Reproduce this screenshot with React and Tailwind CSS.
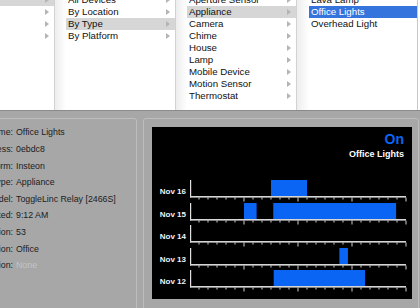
const byGroup = ['All Devices', 'By Location', 'By Type', 'By Platform'];
const byType = ['Aperture Sensor', 'Appliance', 'Camera', 'Chime', 'House', 'Lamp', 'Mobile Device', 'Motion Sensor', 'Thermostat'];
const devices = ['Lava Lamp', 'Office Lights', 'Overhead Light'];

const info = [
  ['Name:', 'Office Lights'],
  ['Address:', '0ebdc8'],
  ['Platform:', 'Insteon'],
  ['Type:', 'Appliance'],
  ['Model:', 'ToggleLinc Relay [2466S]'],
  ['Last Updated:', '9:12 AM'],
  ['Firmware Version:', '53'],
  ['Location:', 'Office'],
  ['Description:', 'None', true],
];

// hours on, per day
const days = [
  { label: 'Nov 16', on: [[9, 13]] },
  { label: 'Nov 15', on: [[6, 7.4], [9.25, 22.9]] },
  { label: 'Nov 14', on: [] },
  { label: 'Nov 13', on: [[16.6, 17.55]] },
  { label: 'Nov 12', on: [[9.3, 19.45]] },
];

const Arrow = () => (
  <svg width="4" height="6" viewBox="0 0 4 6" className="shrink-0">
    <path d="M0 0L4 3L0 6Z" fill="#b4b4b4" />
  </svg>
);

const Divider = () => (
  <div className="w-[12px] shrink-0 border-l border-[#d2d2d2] bg-gradient-to-r from-[#ededed] to-white" />
);

const Column = ({ items, selected, width, arrows = true, blue = false }) => (
  <div className={`${width} shrink-0 mt-[-6px] flex flex-col`}>
    {items.map((item, i) => {
      const sel = i === selected;
      return (
        <div
          key={i}
          className={`h-[12px] leading-[12px] flex items-center justify-between pl-[2px] pr-[5px] whitespace-nowrap ${
            sel ? (blue ? 'bg-[#3574dc] text-white' : 'bg-[#d6d6d6]') : ''
          }`}
        >
          <span>{item}</span>
          {arrows && <Arrow />}
        </div>
      );
    })}
  </div>
);

const DayRow = ({ day }) => (
  <div className="flex h-[22.6px]">
    <div className="w-[34px] h-[16px] flex items-end justify-end text-[8px] leading-[9px] font-bold text-[#f2f2f2]">
      {day.label}
    </div>
    <svg width="218" height="22" className="ml-[4px]">
      {day.on.map(([a, b], i) => (
        <rect key={i} x={a * 9} y="0" width={(b - a) * 9} height="16.5" fill="#0a64f4" />
      ))}
      <rect x="0" y="0" width="1.2" height="17.5" fill="#e0e0e0" />
      <rect x="0" y="16" width="216" height="1.6" fill="#d6d6d6" />
      {Array.from({ length: 24 }, (_, k) => k + 1).map((k) => (
        <rect key={k} x={k * 9 - 0.5} y="17.5" width="1" height={k % 6 === 0 ? 4 : 2} fill="#cfcfcf" />
      ))}
    </svg>
  </div>
);

export default function App() {
  return (
    <div className="w-[420px] h-[308px] overflow-hidden font-['Liberation_Sans',sans-serif] text-[#111]">
      {/* Column browser */}
      <div className="flex h-[110px] overflow-hidden bg-white text-[9.7px]">
        <Column items={['', '', '', '']} selected={0} width="w-[54px]" />
        <Divider />
        <Column items={byGroup} selected={2} width="w-[109px]" />
        <Divider />
        <Column items={byType} selected={1} width="w-[109px]" />
        <div className="w-[13px] shrink-0 border-l border-[#d2d2d2] bg-gradient-to-r from-[#ededed] to-white" />
        <div className="w-[109px] shrink-0 border-r border-[#c8c8c8]">
          <Column items={devices} selected={1} width="w-[108px]" arrows={false} blue />
        </div>
      </div>

      {/* Detail area */}
      <div className="flex h-[198px] border-t border-[#8b8b8b] bg-[#a7a7a7] pt-[7px]">
        <div className="ml-[-80px] w-[217px] h-[200px] shrink-0 rounded-[3px] border border-[#bdbdbd] pt-[5.4px]">
          <div className="grid grid-cols-[92px_1fr] gap-x-[3px] text-[8.8px]">
            {info.map(([label, value, dim]) => (
              <div key={label} className="contents">
                <div className="h-[16.6px] leading-[16.6px] text-right whitespace-nowrap text-[#1c1c1c]">{label}</div>
                <div className={`h-[16.6px] leading-[16.6px] whitespace-nowrap ${dim ? 'text-[#c4c4c4]' : 'text-[#1c1c1c]'}`}>
                  {value}
                </div>
              </div>
            ))}
          </div>
        </div>

        <div className="ml-[6px] w-[276px] h-[200px] shrink-0 rounded-[3px] border border-[#bdbdbd] pl-[8px] pt-[8px]">
          <div className="w-[260px] h-[172px] bg-black">
            <div className="h-[53px] pt-[5px] pr-[8px] flex flex-col items-end">
              <div className="text-[14px] leading-[14px] font-bold text-[#0a64f4]">On</div>
              <div className="mt-[3px] text-[9px] leading-[10px] font-bold text-white">Office Lights</div>
            </div>
            {days.map((d) => (
              <DayRow key={d.label} day={d} />
            ))}
          </div>
        </div>
      </div>
    </div>
  );
}
